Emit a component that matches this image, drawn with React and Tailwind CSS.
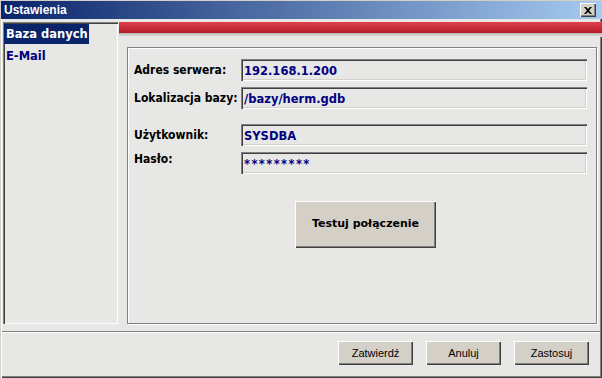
import React from "react";

const raised =
  "bg-[#d4d0c8] shadow-[inset_1px_1px_0_#ffffff,inset_-1px_-1px_0_#404040,inset_-2px_-2px_0_#808080]";
const sunken =
  "bg-[#e7e7e5] shadow-[inset_1px_1px_0_#808080,inset_2px_2px_0_#404040,inset_-1px_-1px_0_#ffffff,inset_-2px_-2px_0_#d4d0c8]";

const labelFont = { fontFamily: '"DejaVu Sans Condensed", "Liberation Sans", sans-serif' };
const valueFont = { fontFamily: '"DejaVu Sans", "Liberation Sans", sans-serif' };

function Field({ label, value, tracking = "", labelClass = "self-center" }) {
  return (
    <div className="flex items-center">
      <div className={`w-[107px] text-[12px] font-bold text-black leading-[14px] ${labelClass}`} style={labelFont}>
        {label}
      </div>
      <div className={`flex-1 h-[22px] ${sunken} flex items-center pl-[3px] pt-[1px]`}>
        <span className={`text-[11.5px] font-bold text-[#000080] leading-[14px] ${tracking}`} style={valueFont}>
          {value}
        </span>
      </div>
    </div>
  );
}

function Btn({ children }) {
  return (
    <div
      className={`w-[75px] h-[24px] ${raised} flex items-center justify-center text-[11px] text-black`}
      style={{ fontFamily: '"Liberation Sans", sans-serif' }}
    >
      {children}
    </div>
  );
}

export default function App() {
  return (
    <div
      className="w-[602px] h-[378px] bg-[#e7e7e5] flex flex-col shadow-[inset_1px_1px_0_#d4d0c8,inset_2px_2px_0_#ffffff,inset_-1px_-1px_0_#404040,inset_-2px_-2px_0_#808080]"
      style={{ fontFamily: '"Liberation Sans", sans-serif' }}
    >
      {/* title bar */}
      <div className="mt-[1px] ml-[1px] h-[18px] bg-[linear-gradient(to_right,#0a246a,#a6caf0)] flex items-center justify-between pl-[3px] pr-[6px]">
        <span className="text-white font-bold text-[12px] leading-[14px]">Ustawienia</span>
        <div className={`w-[16px] h-[14px] ${raised} flex items-center justify-center`}>
          <svg width="8" height="7" viewBox="0 0 8 7">
            <path d="M0 0 L2 0 L4 2 L6 0 L8 0 L5 3.5 L8 7 L6 7 L4 5 L2 7 L0 7 L3 3.5 Z" fill="#000" />
          </svg>
        </div>
      </div>

      {/* main */}
      <div className="mt-[3px] h-[302px] flex">
        <div className="ml-[3px] w-[115px] shadow-[inset_1px_1px_0_#808080,inset_2px_2px_0_#404040,inset_-1px_-1px_0_#ffffff] pt-[2px]">
          <div className="ml-[1px] w-[85px] h-[20px] bg-[#0a246a] flex items-center pl-[2px]">
            <span className="text-white font-bold text-[11.5px] leading-[14px]" style={valueFont}>
              Baza danych
            </span>
          </div>
          <div className="ml-[1px] h-[24px] flex items-center pl-[2px]">
            <span className="text-[#000080] font-bold text-[11.5px] leading-[14px]" style={valueFont}>
              E-Mail
            </span>
          </div>
        </div>

        <div className="ml-[1px] flex-1 flex flex-col">
          <div className="h-[11px] bg-[linear-gradient(to_bottom,#e0404c,#b41c2a)]" />
          <div className="h-[4px] bg-[linear-gradient(to_bottom,#b4b4b2,#e7e7e5)]" />
          <div className="mt-[10px] ml-[8px] mr-[5px] flex-1 border border-[#808080] shadow-[inset_1px_1px_0_#ffffff,1px_1px_0_#ffffff] pt-[11px] pl-[6px] pr-[9px]">
            <div className="flex flex-col">
              <Field label="Adres serwera:" value="192.168.1.200" />
              <div className="h-[6px]" />
              <Field label="Lokalizacja bazy:" value="/bazy/herm.gdb" />
              <div className="h-[15px]" />
              <Field label="Użytkownik:" value="SYSDBA" />
              <div className="h-[6px]" />
              <Field label="Hasło:" value="*********" tracking="tracking-[1.4px]" labelClass="self-start" />
            </div>
            <div
              className={`mt-[27px] ml-[161px] w-[141px] h-[47px] ${raised} flex items-center justify-center`}
            >
              <span className="text-[11px] font-bold text-black" style={valueFont}>
                Testuj połączenie
              </span>
            </div>
          </div>
        </div>
      </div>

      {/* separator */}
      <div className="mt-[7px] mx-[2px] h-[2px] border-t border-[#808080] border-b-white border-b" />

      {/* buttons */}
      <div className="mt-[8px] flex justify-end gap-[13px] pr-[13px]">
        <Btn>Zatwierdź</Btn>
        <Btn>Anuluj</Btn>
        <Btn>Zastosuj</Btn>
      </div>
    </div>
  );
}
